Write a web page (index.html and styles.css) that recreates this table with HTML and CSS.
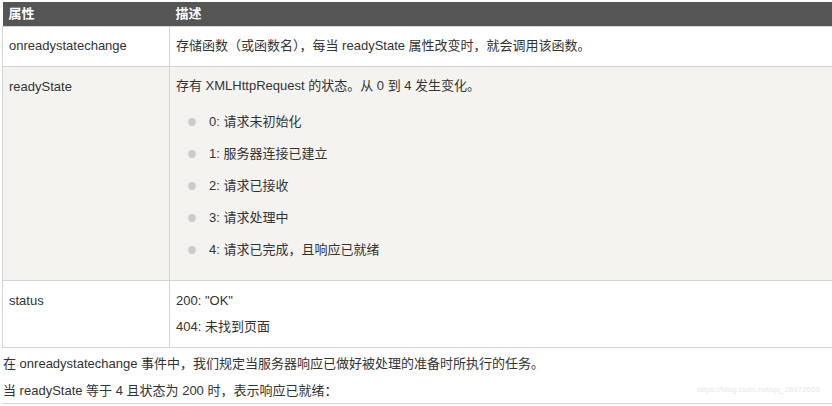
FILE: index.html
```html
<!DOCTYPE html>
<html lang="zh-CN">
<head>
    <meta charset="UTF-8">
    <title>XMLHttpRequest 属性</title>
    <link rel="stylesheet" href="styles.css">
</head>
<body>
    <table class="ref-table">
        <tr>
            <th class="col-name">属性</th>
            <th>描述</th>
        </tr>
        <tr>
            <td>onreadystatechange</td>
            <td><p>存储函数（或函数名），每当 readyState 属性改变时，就会调用该函数。</p></td>
        </tr>
        <tr class="alt">
            <td>readyState</td>
            <td>
                <p>存有 XMLHttpRequest 的状态。从 0 到 4 发生变化。</p>
                <ul class="states">
                    <li>0: 请求未初始化</li>
                    <li>1: 服务器连接已建立</li>
                    <li>2: 请求已接收</li>
                    <li>3: 请求处理中</li>
                    <li>4: 请求已完成，且响应已就绪</li>
                </ul>
            </td>
        </tr>
        <tr class="status">
            <td>status</td>
            <td>
                <p>200: "OK"</p>
                <p>404: 未找到页面</p>
            </td>
        </tr>
    </table>

    <p class="text">在 onreadystatechange 事件中，我们规定当服务器响应已做好被处理的准备时所执行的任务。</p>
    <p class="text">当 readyState 等于 4 且状态为 200 时，表示响应已就绪：</p>
    <div class="code-block"></div>

    <span class="watermark">https://blog.csdn.net/qq_28872655</span>
</body>
</html>
```

FILE: styles.css
```css
html, body {
    margin: 0;
    overflow: hidden;
}
body {
    font-family: "Liberation Sans", "Noto Sans CJK SC", sans-serif;
    font-size: 13px;
    line-height: 20px;
    color: #333;
    background: #fff;
    padding: 2px 0 0 2px;
    position: relative;
    height: 404px;
}
.ref-table {
    width: 840px;
    border-collapse: collapse;
}
.ref-table th {
    background-color: #555;
    color: #fff;
    font-weight: bold;
    text-align: left;
    padding: 2px 6px;
    line-height: 20px;
}
.ref-table .col-name {
    width: 155px;
}
.ref-table td {
    border: 1px solid #d4d4d4;
    border-right: none;
    vertical-align: top;
    padding: 3px 6px 4px;
}
.ref-table td:first-child {
    padding-top: 9px;
}
.ref-table tr.alt td {
    background-color: #f4f3f0;
}
.ref-table tr.alt td:first-child {
    padding-top: 10px;
}
.ref-table tr.status td {
    padding-bottom: 4px;
}
.ref-table tr.status td:first-child {
    padding-top: 10px;
}
.ref-table p {
    margin: 6px 0;
}
.ref-table tr.status p:first-child {
    margin-top: 7px;
}
.states {
    list-style: none;
    margin: 16px 0 16px;
    padding: 0 0 0 12px;
}
.states li {
    position: relative;
    padding-left: 21px;
    margin-bottom: 12px;
}
.states li:last-child {
    margin-bottom: 0;
}
.states li::before {
    content: "";
    position: absolute;
    left: 0;
    top: 6px;
    width: 8px;
    height: 8px;
    border-radius: 50%;
    background-color: #ccc;
}
.text {
    margin: 6px 0 7px 0;
    padding-left: 1px;
}
.code-block {
    border-top: 1px solid #d4d4d4;
    margin-top: -5px;
    height: 20px;
}
.watermark {
    position: absolute;
    right: 12px;
    top: 380px;
    font-size: 8px;
    color: #e6e6e6;
}
```
